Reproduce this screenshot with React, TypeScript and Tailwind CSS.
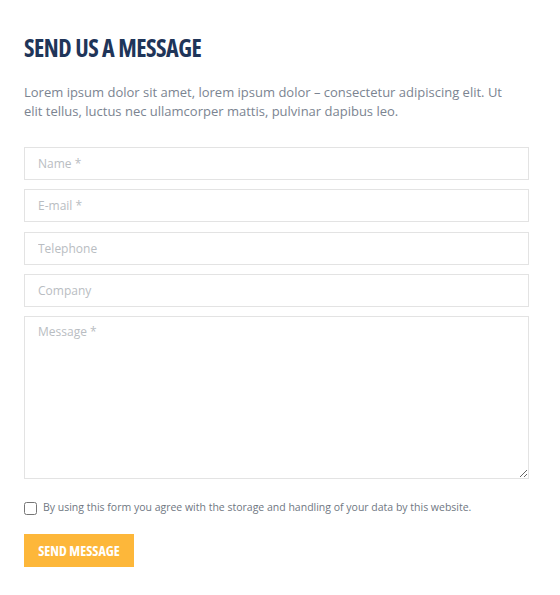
import React from "react";

export default function App() {
  const inputCls =
    "w-full h-[33px] border border-[#e3e3e3] bg-white px-[13px] text-[12px] text-[#555] placeholder:text-[#b9bdc2] outline-none";
  return (
    <div className="w-[560px] h-[595px] bg-white" style={{ fontFamily: '"Open Sans", sans-serif' }}>
      <div className="pl-[24px] pr-[31px] pt-[33px]">
        <h2
          className="text-[24px] leading-[30px] font-bold text-[#1f3559] uppercase tracking-[-0.45px]"
          style={{ fontFamily: '"Open Sans", sans-serif', fontStretch: "condensed" }}
        >
          Send us a message
        </h2>
        <p className="mt-[20px] w-[490px] text-[13px] leading-[19px] text-[#7b8491]">
          Lorem ipsum dolor sit amet, lorem ipsum dolor – consectetur adipiscing elit. Ut elit tellus, luctus nec ullamcorper mattis, pulvinar dapibus leo.
        </p>
        <form className="mt-[26px] flex flex-col gap-[9.25px]">
          <input className={inputCls} placeholder="Name *" />
          <input className={inputCls} placeholder="E-mail *" />
          <input className={inputCls} placeholder="Telephone" />
          <input className={inputCls} placeholder="Company" />
          <textarea
            className="w-full h-[163px] border border-[#e3e3e3] bg-white px-[13px] py-[6px] text-[12px] text-[#555] placeholder:text-[#b9bdc2] outline-none"
            placeholder="Message *"
          />
          <label className="mt-[12px] flex items-center gap-[6px] text-[10.5px] text-[#6f7782]">
            <input type="checkbox" className="w-[13px] h-[13px] m-0" />
            <span>By using this form you agree with the storage and handling of your data by this website.</span>
          </label>
          <button
            type="button"
            className="mt-[9px] w-[110px] h-[33px] bg-[#fdb73a] text-white text-[14px] font-bold uppercase"
            style={{ fontFamily: '"Open Sans", sans-serif', fontStretch: "condensed" }}
          >
            Send message
          </button>
        </form>
      </div>
    </div>
  );
}
